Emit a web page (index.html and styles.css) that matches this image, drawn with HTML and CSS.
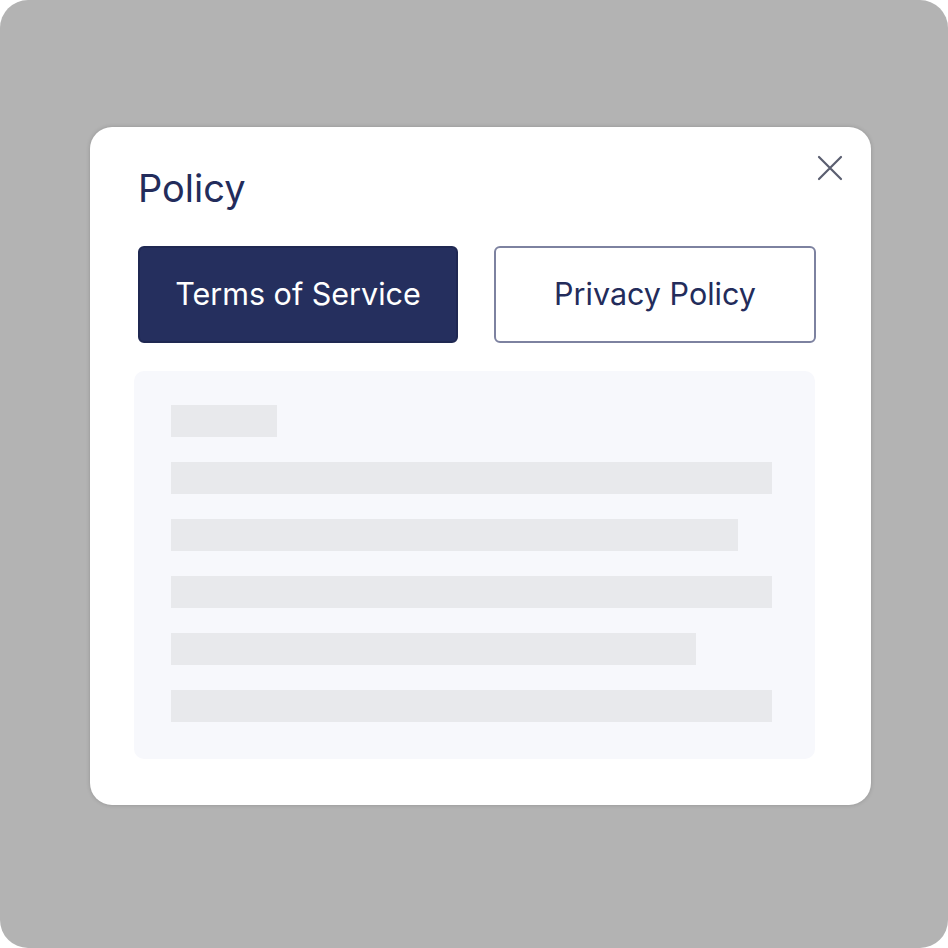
FILE: index.html
```html
<!DOCTYPE html>
<html lang="en">
<head>
<meta charset="UTF-8">
<title>Policy</title>
<link rel="stylesheet" href="styles.css">
</head>
<body>
<div class="backdrop">
  <div class="modal">
    <button class="close" aria-label="Close">
      <svg width="26" height="26" viewBox="0 0 26 26"><path d="M2 2L24 24M24 2L2 24" stroke="#5a5e70" stroke-width="2.2" stroke-linecap="round"/></svg>
    </button>
    <h1 class="title">Policy</h1>
    <div class="tabs">
      <div class="tab current">Terms of Service</div>
      <div class="tab">Privacy Policy</div>
    </div>
    <div class="panel">
      <div class="bar head"></div>
      <div class="bar w1"></div>
      <div class="bar w2"></div>
      <div class="bar w1"></div>
      <div class="bar w3"></div>
      <div class="bar w1"></div>
    </div>
  </div>
</div>
</body>
</html>
```

FILE: styles.css
```css
html,body{margin:0;padding:0;background:#ffffff;}
body{font-family:Inter,"Noto Sans",sans-serif;}
.backdrop{
width:948px;height:948px;background:#b3b3b3;border-radius:28px;
display:flex;align-items:flex-start;box-sizing:border-box;padding:127px 0 0 90px;
}
.modal{
position:relative;width:781px;height:678px;background:#ffffff;border-radius:22px;
box-sizing:border-box;padding:34px 55px 0 48px;
box-shadow:0 0 4px rgba(0,0,0,0.18);
}
.close{
position:absolute;top:28px;left:727px;
background:none;border:0;padding:0;width:26px;height:26px;cursor:pointer;
}
.title{margin:0;font-size:38px;font-weight:400;color:#232c5b;line-height:54px;letter-spacing:0;}
.tabs{display:flex;gap:36px;margin-top:31px;}
.tab{
width:322px;height:97px;box-sizing:border-box;border-radius:6px;padding-bottom:3px;
display:flex;align-items:center;justify-content:center;
font-size:30.5px;color:#232c5b;border:2px solid #7d82a0;
}
.tab.current{width:320px;background:#252f5e;border-color:#1f2852;color:#ffffff;}
.panel{
margin:28px 0 0 -4px;width:681px;height:388px;background:#f7f8fc;border-radius:10px;
box-sizing:border-box;padding:34px 0 0 37px;
display:flex;flex-direction:column;gap:25px;
}
.bar{height:32px;background:#e8e9ec;}
.bar.head{width:106px;}
.bar.w1{width:601px;}
.bar.w2{width:567px;}
.bar.w3{width:525px;}
```
